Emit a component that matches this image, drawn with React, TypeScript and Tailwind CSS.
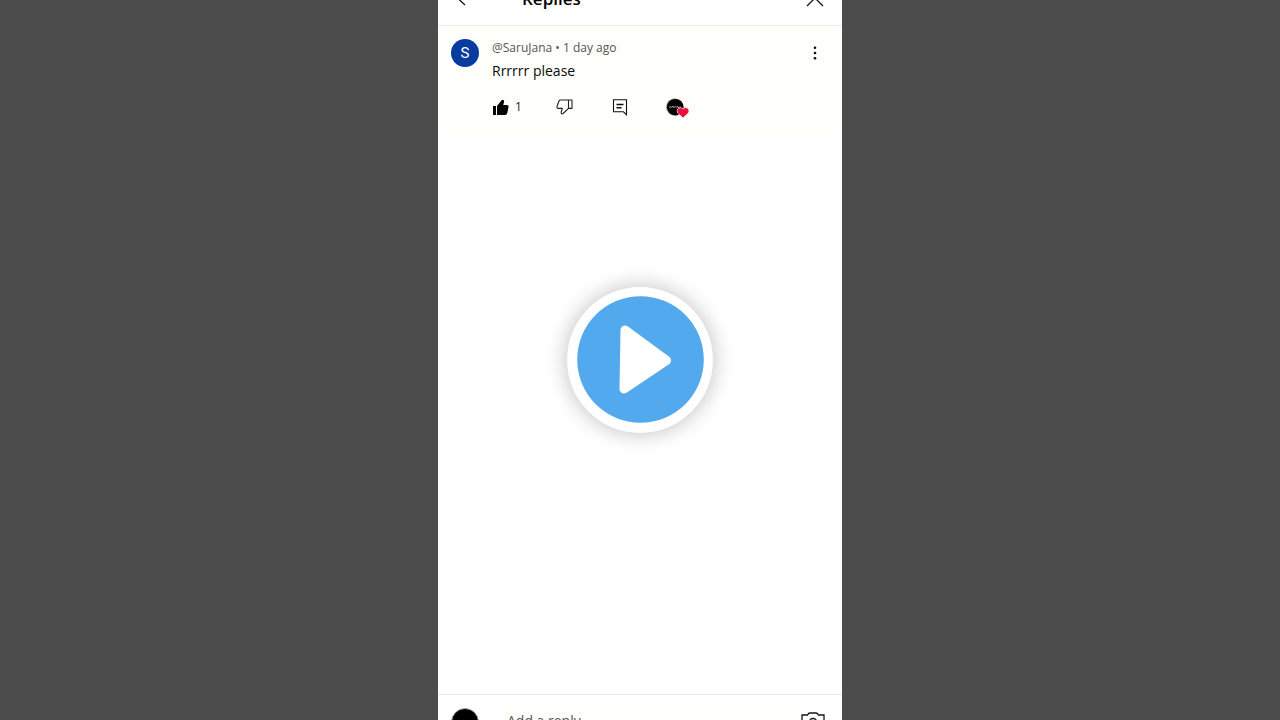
import React from "react";

function CommentActions() {
  return (
    <div className="flex h-6 items-center">
      <button type="button" aria-label="Like" className="flex w-16 items-center gap-1.5">
        <svg width="17" height="16" viewBox="0 0 17 16" fill="#050505">
          <path d="M1 7h3v9H1zM5 7 9.600 1.200Q10.400.3 11.400 1t.7 2L11.200 6H15q1.800 0 1.600 1.600L15.300 14q-.4 1.900-2.300 1.900H5z" />
        </svg>
        <span className="text-[12px] leading-4 text-[#222]">1</span>
      </button>
      <button type="button" aria-label="Dislike" className="w-14">
        <svg width="17" height="16" viewBox="0 0 17 16" fill="none" stroke="#222" strokeWidth="1.1" strokeLinejoin="round">
          <path d="M12.5 1H4.3Q3.300 1 3 2L1 7.500Q.7 9.400 2.300 9.400H6.400L5.200 13q-.3 1.500.7 2 .7.1 1.200-.5l5.400-5.100zM12.500 1H16v8.400h-3.500z" />
        </svg>
      </button>
      <button type="button" aria-label="Reply" className="w-[54px]">
        <svg width="16" height="17" viewBox="0 0 16 17" fill="none" stroke="#111" strokeWidth="1.1">
          <path d="M1.500 .8h13v15l-3-3h-10z" />
          <path d="M4.500 5.500h7M4.500 8.800h5" strokeWidth="1.5" />
        </svg>
      </button>
      <button type="button" aria-label="Liked by creator">
        <svg width="24" height="22" viewBox="0 0 24 22">
          <circle cx="8.800" cy="11" r="8.800" fill="#aaa" />
          <circle cx="9.200" cy="11.200" r="8.300" fill="#030303" />
          <path d="m3 11.500 2-1 .5 1 1.500-1.500.5 1.500 2-1 .5 1 1.500-1.300.5 1.300 3-.5" fill="none" stroke="#ddd" strokeWidth=".7" />
          <path d="M17 21.900 11.600 17Q10.300 14.200 12 12.400 14.500 10.600 17 12.700 19.500 10.600 22 12.400 23.700 14.200 22.400 17Z" fill="#e8103f" stroke="#fff" strokeWidth=".6" />
        </svg>
      </button>
    </div>
  );
}

export default function App() {
  return (
    <div className="relative flex h-screen justify-center overflow-hidden bg-[#4c4c4c] font-['Open_Sans',sans-serif]">
      <div className="flex w-full max-w-[404px] flex-col bg-white">
        <header className="flex h-[26px] shrink-0 items-end overflow-hidden border-b border-[#ebebe8]">
          <div className="flex h-[52px] w-full shrink-0 items-center px-4">
            <button type="button" aria-label="Back" className="w-[68px]">
              <svg width="14" height="16" viewBox="0 0 14 16" fill="none" stroke="#111" strokeWidth="1.3">
                <path d="M11 14 4 7.500 11 1" />
              </svg>
            </button>
            <h1 className="flex-1 text-[17px] leading-6 font-semibold text-black">Replies</h1>
            <button type="button" aria-label="Close">
              <svg width="22" height="18" viewBox="0 0 22 18" fill="none" stroke="#111" strokeWidth="1.3">
                <path d="m3 0 16 16M19 0 3 16" />
              </svg>
            </button>
          </div>
        </header>

        <main className="flex-1">
          <article className="flex items-start bg-[#fefefb] px-[13px] pt-[13px] pb-4">
            <div className="flex size-7 shrink-0 items-center justify-center rounded-full bg-[#073c9e] font-[Roboto,sans-serif] text-[15px] leading-4 text-white">
              S
            </div>
            <div className="ml-[13px] flex-1">
              <p className="text-[12px] leading-[18px] text-[#555]">@SaruJana • 1 day ago</p>
              <p className="mt-1 mb-3.5 text-[14px] leading-5 text-[#0a0a0a]">Rrrrrr please</p>
              <CommentActions />
            </div>
            <button type="button" aria-label="More options" className="mr-2 pt-1.5">
              <svg width="12" height="16" viewBox="0 0 12 16" fill="#0a0a0a">
                <circle cx="6" cy="2.800" r="1.3" />
                <circle cx="6" cy="8" r="1.3" />
                <circle cx="6" cy="13.200" r="1.3" />
              </svg>
            </button>
          </article>
        </main>

        <footer className="h-[26px] shrink-0 overflow-hidden border-t border-[#e9e9e9]">
          <div className="flex h-[54px] items-center px-[13px]">
            <div className="size-7 shrink-0 rounded-full border border-[#aaa] bg-black" />
            <input
              type="text"
              aria-label="Add a reply"
              placeholder="Add a reply..."
              className="ml-7 h-9 min-w-0 flex-1 bg-[#fefefb] pb-1 text-[14px] leading-5 outline-none placeholder:text-[#555]"
            />
            <button type="button" aria-label="Add photo" className="mx-1">
              <svg width="24" height="20" viewBox="0 0 24 20" fill="none" stroke="#161616" strokeWidth="1.3">
                <path d="M1 3h5.500Q7.500 1 9 1h6q1.500 0 2.500 2H23v16H1z" />
                <circle cx="12" cy="10.500" r="4" />
              </svg>
            </button>
          </div>
        </footer>
      </div>

      <div className="pointer-events-none absolute inset-0 flex items-center justify-center">
        <button
          type="button"
          aria-label="Play"
          className="pointer-events-auto flex size-[146px] items-center justify-center rounded-full bg-white shadow-[0_0_20px_2px_rgba(0,0,0,0.22)]"
        >
          <svg width="128" height="128" viewBox="0 0 128 128">
            <circle cx="64.500" cy="63.500" r="63.300" fill="#53a9ed" />
            <path d="M49 34 90.500 64.500 48 93Z" fill="#fff" stroke="#fff" strokeWidth="9" strokeLinejoin="round" />
          </svg>
        </button>
      </div>
    </div>
  );
}
